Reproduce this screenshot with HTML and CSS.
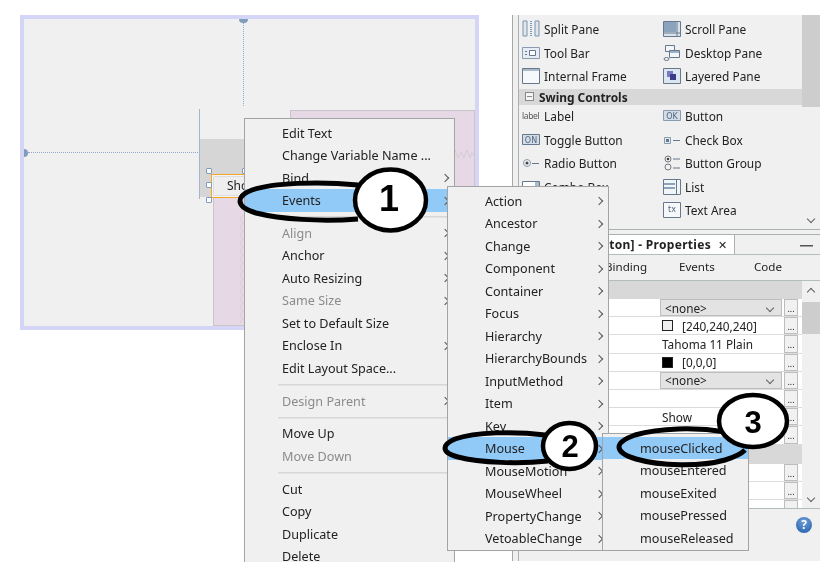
FILE: index.html
```html
<!DOCTYPE html>
<html lang="en">

<head>
  <meta charset="UTF-8">
  <title>Events menu</title>
  <link rel="stylesheet" href="styles.css">
</head>

<body>
  <div class="stage">
    <!-- form designer -->
    <div class="designer">
      <div class="guide-v"></div>
      <div class="guide-cap"></div>
      <div class="guide-h"></div>
      <div class="guide-dot guide-dot-a"></div>
      <div class="guide-dot guide-dot-b"></div>
      <div class="anchor-line"></div>
      <div class="pink pink-top"></div>
      <div class="pink pink-low"></div>
      <svg class="zig zig-v" viewBox="0 0 5 110"><path d="M4 0L1 4L4 8L1 12L4 16L1 20L4 24L1 28L4 32L1 36L4 40L1 44L4 48L1 52L4 56L1 60L4 64L1 68L4 72L1 76L4 80L1 84L4 88L1 92L4 96L1 100L4 104L1 108"/></svg>
      <svg class="zig zig-h" viewBox="0 0 20 10"><path d="M0 1L3 9L6 3L9 9L12 1M12 1L15 9L17 3L20 9"/></svg>
      <div class="grey-box"></div>
      <div class="show-btn"><span>Show</span></div>
      <div class="handle h1"></div>
      <div class="handle h2"></div>
      <div class="handle h3"></div>
      <div class="handle h4"></div>
    </div>

    <div class="sidebar">
      <!-- palette -->
      <div class="palette">
        <div class="palette-body">
          <div class="pal-grid">
            <div class="pal-item"><svg class="ico" viewBox="0 0 18 18"><path d="M1 1h4v15H1zM13 1h4v15h-4z" fill="#dfe6ee" stroke="#7f93a8"/><path d="M9 1v15" stroke="#6f9cc0" stroke-dasharray="1 1" stroke-width="2"/></svg>Split Pane</div>
            <div class="pal-item"><svg class="ico" viewBox="0 0 18 18"><path d="M.5 1.500h17v15H.5z" fill="#d9e2ec" stroke="#66788c"/><path d="M1 2h12v10H1z" fill="#8ba3bd"/><path d="M14 1.500v15M1 13h16" stroke="#66788c"/></svg>Scroll Pane</div>
            <div class="pal-item"><svg class="ico" viewBox="0 0 18 18"><path d="M.5 3.500h17v11H.5z" fill="#e6edf4" stroke="#8a9bad"/><path d="M3 7h2v1H3zM3 10h2v1H3z" fill="#66788c"/><path d="M7.500 6.500h6v5h-6z" fill="#fff" stroke="#66788c"/></svg>Tool Bar</div>
            <div class="pal-item"><svg class="ico" viewBox="0 0 18 18"><path d="M2.500 1.500h9v6h-9zM6.500 6.500h10v7h-10z" fill="#f4f7fa" stroke="#66788c"/><path d="M7 7h9v2H7z" fill="#9bb2c8"/><ellipse cx="3.500" cy="15" rx="2.500" ry="1.500" fill="none" stroke="#66788c"/></svg>Desktop Pane</div>
            <div class="pal-item"><svg class="ico" viewBox="0 0 18 18"><path d="M.5 1.500h17v15H.5z" fill="#f6f8fb" stroke="#66788c"/><path d="M1 2h16v2H1z" fill="#a9bacb"/></svg>Internal Frame</div>
            <div class="pal-item"><svg class="ico" viewBox="0 0 18 18"><path d="M.5 1.500h17v15H.5z" fill="#dce6f0" stroke="#66788c"/><path d="M4 4h6v6H4z" fill="#7a7ac0"/><path d="M7 7h6v6H7z" fill="#3b3b8c"/></svg>Layered Pane</div>
          </div>
          <div class="pal-head"><span class="pal-minus"></span>Swing Controls</div>
          <div class="pal-grid">
            <div class="pal-item"><span class="ico ico-label">label</span>Label</div>
            <div class="pal-item"><svg class="ico" viewBox="0 0 18 18"><path d="M.5 3.500h17v10H.5z" fill="#d3dde8" stroke="#8a9bad"/><text x="9" y="11.500" class="ico-text">OK</text></svg>Button</div>
            <div class="pal-item"><svg class="ico" viewBox="0 0 18 18"><path d="M.5 3.500h17v10H.5z" fill="#d3dde8" stroke="#66788c"/><text x="9" y="11.500" class="ico-text">ON</text></svg>Toggle Button</div>
            <div class="pal-item"><svg class="ico" viewBox="0 0 18 18"><path d="M1.500 6.500h6v6h-6z" fill="#e4ebf2" stroke="#8a9bad"/><path d="M3 8h3v3H3z" fill="#66788c"/><path d="M10 9.500h7" stroke="#66788c"/></svg>Check Box</div>
            <div class="pal-item"><svg class="ico" viewBox="0 0 18 18"><circle cx="5" cy="9" r="3.500" fill="#eef2f6" stroke="#8a9bad"/><circle cx="5" cy="9" r="1.500" fill="#444"/><path d="M10 9.500h7" stroke="#66788c"/></svg>Radio Button</div>
            <div class="pal-item"><svg class="ico" viewBox="0 0 18 18"><circle cx="5" cy="5" r="3" fill="#eef2f6" stroke="#777"/><circle cx="5" cy="5" r="1.300" fill="#444"/><circle cx="5" cy="13" r="3" fill="#eef2f6" stroke="#777"/><path d="M10 5h7M10 14h7" stroke="#66788c"/></svg>Button Group</div>
            <div class="pal-item"><svg class="ico" viewBox="0 0 18 18"><path d="M.5 3.500h17v11H.5z" fill="#fff" stroke="#66788c"/><path d="M13 4h4v10h-4z" fill="#a9bacb"/></svg>Combo Box</div>
            <div class="pal-item"><svg class="ico" viewBox="0 0 18 18"><path d="M.5 1.500h17v15H.5z" fill="#f2f5f8" stroke="#66788c"/><path d="M1 5h11v2H1zM1 9h11v2H1z" fill="#8ba3bd"/><path d="M13.500 2v14" stroke="#66788c"/></svg>List</div>
            <div class="pal-item"><svg class="ico" viewBox="0 0 18 18"><path d="M.5 3.500h17v10H.5z" fill="#fff" stroke="#66788c"/></svg>Text Field</div>
            <div class="pal-item"><svg class="ico" viewBox="0 0 18 18"><path d="M.5 1.500h17v15H.5z" fill="#f6f8fb" stroke="#66788c"/><text x="9" y="11" class="ico-text">tx</text></svg>Text Area</div>
          </div>
        </div>
        <div class="scrollbar pal-scroll">
          <div class="pal-thumb"></div>
          <span class="chev-down"></span>
        </div>
      </div>

      <!-- properties -->
      <div class="props">
        <div class="props-title">
          <div class="props-tab">[JButton] - Properties<span class="tab-close">&#x2715;</span></div>
          <div class="props-min"></div>
        </div>
        <div class="props-tabs">
          <span class="t-binding">Binding</span>
          <span class="t-events">Events</span>
          <span class="t-code">Code</span>
        </div>
        <div class="props-main">
          <div class="props-rows">
            <div class="prop-group"></div>
            <div class="prop-row"><div class="combo">&lt;none&gt;<span class="chev-down"></span></div><div class="more">...</div></div>
            <div class="prop-row"><div class="val"><span class="swatch swatch-light"></span>[240,240,240]</div><div class="more">...</div></div>
            <div class="prop-row"><div class="val">Tahoma 11 Plain</div><div class="more">...</div></div>
            <div class="prop-row"><div class="val"><span class="swatch swatch-dark"></span>[0,0,0]</div><div class="more">...</div></div>
            <div class="prop-row"><div class="combo">&lt;none&gt;<span class="chev-down"></span></div><div class="more">...</div></div>
            <div class="prop-row"><div class="val"></div><div class="more">...</div></div>
            <div class="prop-row"><div class="val">Show</div><div class="more">...</div></div>
            <div class="prop-row"><div class="val"></div><div class="more">...</div></div>
            <div class="prop-group prop-group-b"></div>
            <div class="prop-row"><div class="val"></div><div class="more">...</div></div>
            <div class="prop-row"><div class="val"></div><div class="more">...</div></div>
            <div class="prop-row"><div class="val"></div><div class="more"></div></div>
          </div>
          <div class="scrollbar props-scroll">
            <span class="chev-up"></span>
            <div class="props-thumb"></div>
            <span class="chev-down"></span>
          </div>
        </div>
        <div class="props-foot"><span class="help">?</span></div>
      </div>
    </div>
  </div>

  <!-- context menu -->
  <div class="menu menu-main">
    <div class="item">Edit Text</div>
    <div class="item">Change Variable Name ...</div>
    <div class="item">Bind<span class="chev"></span></div>
    <div class="item active">Events<span class="chev"></span></div>
    <div class="sep"></div>
    <div class="item off">Align<span class="chev"></span></div>
    <div class="item">Anchor<span class="chev"></span></div>
    <div class="item">Auto Resizing<span class="chev"></span></div>
    <div class="item off">Same Size<span class="chev"></span></div>
    <div class="item">Set to Default Size</div>
    <div class="item">Enclose In<span class="chev"></span></div>
    <div class="item">Edit Layout Space...</div>
    <div class="sep"></div>
    <div class="item off">Design Parent<span class="chev"></span></div>
    <div class="sep"></div>
    <div class="item">Move Up</div>
    <div class="item off">Move Down</div>
    <div class="sep"></div>
    <div class="item">Cut</div>
    <div class="item">Copy</div>
    <div class="item">Duplicate</div>
    <div class="item">Delete</div>
  </div>

  <div class="menu menu-events">
    <div class="item">Action<span class="chev"></span></div>
    <div class="item">Ancestor<span class="chev"></span></div>
    <div class="item">Change<span class="chev"></span></div>
    <div class="item">Component<span class="chev"></span></div>
    <div class="item">Container<span class="chev"></span></div>
    <div class="item">Focus<span class="chev"></span></div>
    <div class="item">Hierarchy<span class="chev"></span></div>
    <div class="item">HierarchyBounds<span class="chev"></span></div>
    <div class="item">InputMethod<span class="chev"></span></div>
    <div class="item">Item<span class="chev"></span></div>
    <div class="item">Key<span class="chev"></span></div>
    <div class="item active">Mouse<span class="chev"></span></div>
    <div class="item">MouseMotion<span class="chev"></span></div>
    <div class="item">MouseWheel<span class="chev"></span></div>
    <div class="item">PropertyChange<span class="chev"></span></div>
    <div class="item">VetoableChange<span class="chev"></span></div>
  </div>

  <div class="menu menu-mouse">
    <div class="item active">mouseClicked</div>
    <div class="item">mouseEntered</div>
    <div class="item">mouseExited</div>
    <div class="item">mousePressed</div>
    <div class="item">mouseReleased</div>
  </div>

  <!-- numbered callouts drawn on top -->
  <svg class="callouts" viewBox="0 0 827 573">
    <path class="oval" d="M358 185C318 181 272 183 252 190C244 193 240 197 240 201C240 206 246 210 256 213C280 219 320 222 358 219"/>
    <ellipse class="bubble" cx="390.500" cy="200" rx="35.500" ry="30.500"/>
    <text class="num" x="389" y="211" font-size="36">1</text>

    <path class="oval" d="M545 435C515 431 475 432 455 439C448 442 445 445 445 448C445 452 450 455 458 457C480 463 520 464 548 461"/>
    <ellipse class="bubble" cx="569.500" cy="446" rx="26.500" ry="23"/>
    <text class="num" x="570" y="457" font-size="31">2</text>

    <path class="oval" d="M726 432C695 427 660 428 635 435C624 439 619 443 619 447C619 452 626 456 636 459C660 466 700 467 725 460C735 457 741 454 745 450"/>
    <ellipse class="bubble" cx="753" cy="421" rx="34" ry="26"/>
    <text class="num" x="753" y="433" font-size="31">3</text>
  </svg>
</body>

</html>
```

FILE: styles.css
```css
html,
body {
  margin: 0;
  background-color: #fff;
}

body {
  position: relative;
  width: 827px;
  height: 573px;
  overflow: hidden;
  font-family: 'Noto Sans', sans-serif;
  font-size: 12.600px;
  color: #222;
}

.stage {
  display: flex;
  padding: 15px 0 0 20px;
  filter: blur(0.5px);
}

/* designer */

.designer {
  position: relative;
  box-sizing: border-box;
  flex: none;
  width: 459px;
  height: 315px;
  border: 4px solid #d5d5f7;
  background-color: #f0f0f0;
}

.guide-v {
  position: absolute;
  left: 219px;
  top: 2px;
  height: 85px;
  border-left: 1px dotted #8fa9c6;
}

.guide-cap {
  position: absolute;
  left: 215px;
  top: 0;
  width: 9px;
  height: 4px;
  border-radius: 0 0 5px 5px;
  background-color: #7f9cbb;
}

.guide-h {
  position: absolute;
  left: 4px;
  top: 133px;
  width: 172px;
  border-top: 1px dotted #8fa9c6;
}

.guide-dot {
  position: absolute;
  width: 4px;
  height: 8px;
  border-radius: 0 5px 5px 0;
  background-color: #7f9cbb;
}

.guide-dot-a {
  left: 0;
  top: 130px;
}

.guide-dot-b {
  left: 176px;
  top: 162px;
}

.anchor-line {
  position: absolute;
  left: 175px;
  top: 90px;
  height: 90px;
  border-left: 1px solid #a3b5cd;
}

.pink {
  position: absolute;
  box-sizing: border-box;
  border: 1px solid #c8c4c8;
  background-color: #e7d8e6;
}

.pink-top {
  left: 266px;
  top: 91px;
  width: 185px;
  height: 216px;
}

.pink-low {
  left: 189px;
  top: 178px;
  width: 60px;
  height: 129px;
}

.zig {
  position: absolute;
  fill: none;
  stroke: #d4ccd4;
}

.zig-v {
  left: 215px;
  top: 196px;
  width: 5px;
  height: 110px;
}

.zig-h {
  left: 431px;
  top: 130px;
  width: 20px;
  height: 10px;
}

.grey-box {
  position: absolute;
  left: 176px;
  top: 120px;
  width: 50px;
  height: 58px;
  background-color: #d6d6d6;
}

.show-btn {
  position: absolute;
  box-sizing: border-box;
  left: 187px;
  top: 155px;
  width: 60px;
  height: 24px;
  padding: 2px 0 0 15px;
  border: 1.500px solid #f2a623;
  background-color: #eee;
  box-shadow: inset 0 0 0 1.500px #f5f5f5, inset 0 0 0 2px #c4c4c4;
  font-size: 12px;
}

.handle {
  position: absolute;
  box-sizing: border-box;
  width: 6px;
  height: 6px;
  border: 1px solid #7f9cbb;
  border-radius: 1px;
  background-color: #fff;
}

.h1 {
  left: 182px;
  top: 149px;
}

.h2 {
  left: 182px;
  top: 163px;
}

.h3 {
  left: 182px;
  top: 178px;
}

.h4 {
  left: 218px;
  top: 149px;
}

/* right side panes */

.sidebar {
  display: flex;
  flex-direction: column;
  gap: 4.500px;
  box-sizing: border-box;
  flex: none;
  width: 308px;
  height: 546px;
  margin-left: 33px;
  padding-left: 5px;
  border-left: 1.500px solid #a8a8a8;
  background-color: #f0f0f0;
}

.palette {
  display: flex;
  flex: none;
  height: 214.500px;
  overflow: hidden;
  box-sizing: border-box;
  border-left: 1px solid #a9b2b2;
  border-bottom: 1.500px solid #a9b2b2;
}

.palette-body {
  flex: 1;
  padding-top: 2.500px;
  font-size: 11.900px;
}

.pal-grid {
  display: grid;
  grid-template-columns: 141px 1fr;
  grid-auto-rows: 23.500px;
}

.pal-item {
  display: flex;
  align-items: center;
  gap: 4px;
  padding-left: 3px;
  white-space: nowrap;
}

.ico {
  flex: none;
  width: 18px;
  height: 18px;
}

.ico-text {
  font-family: 'DejaVu Sans', sans-serif;
  font-size: 8px;
  fill: #54687c;
  text-anchor: middle;
}

.ico-label {
  display: block;
  font-size: 8.500px;
  line-height: 18px;
  letter-spacing: -0.4px;
  color: #555;
}

.pal-head {
  display: flex;
  align-items: center;
  gap: 5px;
  height: 16px;
  margin: 0.500px 0 0;
  padding-left: 6px;
  background-color: #d8d8d8;
  font-weight: 700;
}

.pal-minus {
  position: relative;
  box-sizing: border-box;
  width: 9px;
  height: 9px;
  border: 1px solid #888;
  background: linear-gradient(#888, #888) center / 5px 1px no-repeat #f4f4f4;
}

.scrollbar {
  display: flex;
  flex-direction: column;
  align-items: center;
  flex: none;
  width: 18px;
  box-sizing: border-box;
}

.pal-scroll {
  background-color: #f0f0f0;
}

.pal-thumb {
  flex: none;
  width: 100%;
  height: 92px;
  margin-bottom: 109px;
  background-color: #cdcdcd;
}

.chev-down,
.chev-up {
  display: block;
  width: 5px;
  height: 5px;
  border-right: 1.500px solid #606060;
  border-bottom: 1.500px solid #606060;
  transform: rotate(45deg);
}

.chev-up {
  transform: rotate(225deg);
}

.props {
  display: flex;
  flex-direction: column;
  flex: none;
  height: 327px;
  box-sizing: border-box;
  border-top: 1px solid #a9b2b2;
  border-left: 1px solid #a9b2b2;
}

.props-title {
  display: flex;
  height: 19px;
  border-bottom: 1px solid #b4bcbc;
}

.props-tab {
  display: flex;
  align-items: center;
  justify-content: flex-end;
  width: 216px;
  box-sizing: border-box;
  border-right: 1px solid #a9b2b2;
  background-color: #fff;
  font-size: 12px;
  font-weight: 700;
  letter-spacing: 0.3px;
  white-space: nowrap;
}

.tab-close {
  width: 23px;
  font-size: 11px;
  font-weight: 400;
  text-align: center;
}

.props-min {
  flex: 1;
  position: relative;
  background: linear-gradient(#555, #555) 65px 10px / 13px 1.500px no-repeat;
}

.props-tabs {
  position: relative;
  height: 25px;
  border-bottom: 1px solid #b4bcbc;
  font-size: 11.600px;
}

.props-tabs span {
  position: absolute;
  top: 4px;
}

.t-binding {
  left: 86px;
}

.t-events {
  left: 160px;
}

.t-code {
  left: 235px;
}

.props-main {
  display: flex;
  flex: none;
  height: 227px;
  overflow: hidden;
}

.props-rows {
  flex: 1;
  background-color: #fff;
  font-size: 11.800px;
}

.prop-group {
  height: 18px;
  background-color: #d8d8d8;
}

.prop-group-b {
  height: 19px;
}

.prop-row {
  display: flex;
  gap: 2px;
  box-sizing: border-box;
  height: 18.200px;
  padding-left: 141px;
  border-bottom: 1px solid #dcdcdc;
}

.val {
  display: flex;
  align-items: center;
  width: 122px;
  padding-left: 2px;
  box-sizing: border-box;
  white-space: nowrap;
}

.combo {
  display: flex;
  align-items: center;
  justify-content: space-between;
  width: 122px;
  padding: 0 8px 0 4px;
  box-sizing: border-box;
  border: 1px solid #bdbdbd;
  background-color: #e3e3e3;
}

.more {
  width: 14px;
  box-sizing: border-box;
  border: 1px solid #bdbdbd;
  background-color: #f1f1f1;
  font-size: 9px;
  line-height: 18px;
  text-align: center;
}

.swatch {
  flex: none;
  width: 11px;
  height: 11px;
  margin-right: 9px;
  box-sizing: border-box;
  border: 1px solid #222;
}

.swatch-light {
  background-color: #f0f0f0;
}

.swatch-dark {
  background-color: #000;
}

.props-scroll {
  justify-content: flex-start;
  padding-top: 8px;
}

.props-thumb {
  flex: none;
  width: 100%;
  height: 32px;
  margin: 7px 0 161px;
  background-color: #cdcdcd;
}

.props-foot {
  display: flex;
  justify-content: flex-end;
  flex: 1;
  padding: 8px 8px 0 0;
  border-top: 1px solid #b4bcbc;
}

.help {
  width: 16px;
  height: 16px;
  border-radius: 50%;
  background: radial-gradient(circle at 50% 30%, #6f9fd8, #1f5ba6);
  color: #fff;
  font-size: 12px;
  font-weight: 700;
  line-height: 16px;
  text-align: center;
}

/* popup menus */

.menu {
  position: absolute;
  box-sizing: border-box;
  padding: 2.800px 0 2px;
  border: 1.500px solid #a4a4a4;
  background-color: #f0f0f0;
  filter: blur(0.5px);
}

.menu-main {
  left: 244px;
  top: 118px;
  width: 211px;
  height: 444px;
  overflow: hidden;
  border-bottom: none;
}

.menu-events {
  left: 447px;
  top: 186px;
  width: 162px;
  height: 365px;
}

.menu-mouse {
  left: 602px;
  top: 433px;
  width: 147px;
  height: 118px;
}

.item {
  display: flex;
  align-items: center;
  justify-content: space-between;
  height: 22.500px;
  padding: 0 6px 0 37px;
  white-space: nowrap;
}

.item.active {
  background-color: #91c9f7;
}

.item.off {
  color: #8b8b8b;
}

.sep {
  height: 10.300px;
  margin-left: 33px;
  background: linear-gradient(#d7d7d7, #d7d7d7) center / 100% 1.500px no-repeat;
}

.chev {
  width: 5px;
  height: 5px;
  border-top: 1.500px solid #555;
  border-right: 1.500px solid #555;
  transform: rotate(45deg);
}

.callouts {
  position: absolute;
  left: 0;
  top: 0;
  width: 827px;
  height: 573px;
  filter: blur(0.35px);
}

.oval {
  fill: none;
  stroke: #000;
  stroke-width: 5;
}

.bubble {
  fill: #fff;
  stroke: #000;
  stroke-width: 4.500;
}

.num {
  font-family: 'Liberation Sans', sans-serif;
  font-weight: 700;
  text-anchor: middle;
  fill: #000;
}
```
